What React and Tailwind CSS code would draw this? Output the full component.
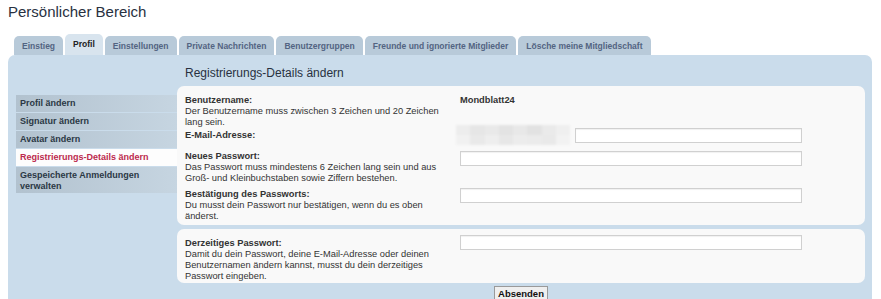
import React from "react";

const tabs = [
  { label: "Einstieg" },
  { label: "Profil", active: true },
  { label: "Einstellungen" },
  { label: "Private Nachrichten" },
  { label: "Benutzergruppen" },
  { label: "Freunde und ignorierte Mitglieder" },
  { label: "Lösche meine Mitgliedschaft" },
];

const navItems = [
  { label: "Profil ändern" },
  { label: "Signatur ändern" },
  { label: "Avatar ändern" },
  { label: "Registrierungs-Details ändern", active: true },
  { label: "Gespeicherte Anmeldungen verwalten", tall: true },
];

// verpixelte E-Mail-Adresse
const blurCells = [
  "#ededed", "#e6e6e6", "#e9e9e9", "#e3e3e3", "#e8e8e8", "#e2e2e2", "#eaeaea", "#efefef",
  "#f1f1f1", "#e9e9e9", "#eeeeee", "#e7e7e7", "#ececec", "#ebebeb", "#e9e9e9", "#f2f2f2",
];

function TextInput({ className = "" }) {
  return (
    <div
      className={`h-[15px] bg-white border border-[#d0d0d0] shadow-[inset_0_1px_1px_rgba(0,0,0,0.06)] ${className}`}
    />
  );
}

export default function App() {
  return (
    <div className="w-[881px] h-[299px] overflow-hidden bg-white text-[#333] font-['Liberation_Sans',Arial,sans-serif]">
      {/* Titel */}
      <h1 className="pt-[3px] pl-2 text-[15px] leading-[18px] text-[#28313f]">Persönlicher Bereich</h1>

      {/* Tabs */}
      <div className="ml-[14px] mt-[13px] flex items-end gap-[2px]">
        {tabs.map((t) =>
          t.active ? (
            <div
              key={t.label}
              className="h-[21px] px-[8px] pt-[5px] rounded-t-[5px] bg-[#d8e4ee] text-[8.5px] font-bold leading-[11px] text-[#222]"
            >
              {t.label}
            </div>
          ) : (
            <div
              key={t.label}
              className="h-[19px] px-[8px] pt-[5px] rounded-t-[5px] bg-[#b8cad9] text-[8.5px] font-bold leading-[11px] text-[#536482]"
            >
              {t.label}
            </div>
          )
        )}
      </div>

      {/* Hauptbereich */}
      <div className="ml-2 mr-[9px] h-[260px] rounded-t-[7px] bg-[#cadceb] flex">
        {/* Navigation links */}
        <div className="ml-2 pt-[40px] w-[161px] flex flex-col gap-[1px]">
          {navItems.map((n) => (
            <div
              key={n.label}
              className={`px-[4px] text-[9px] font-bold ${
                n.tall ? "pt-[3px] pb-[2px] leading-[10.5px]" : "h-[17px] leading-[17px]"
              } ${
                n.active
                  ? "bg-[#fdfdfd] text-[#bc2a4d]"
                  : "bg-gradient-to-r from-[#b2c2cf] to-[#c6d5e1] text-[#2b3845]"
              }`}
            >
              {n.tall ? (
                <>
                  Gespeicherte Anmeldungen
                  <br />
                  verwalten
                </>
              ) : (
                n.label
              )}
            </div>
          ))}
        </div>

        {/* Inhalt */}
        <div className="flex-1 mr-[7px] pt-[6px] flex flex-col">
          <h2 className="pl-2 text-[12px] leading-[25px] text-[#28313f]">Registrierungs-Details ändern</h2>

          {/* Panel 1 */}
          <div className="bg-[#f9f9f9] rounded-[7px] pl-2 pt-[9px] pb-[3px] text-[9.3px] leading-[11px]">
            <div className="flex">
              <div className="w-[275px] pr-[10px]">
                <div className="font-bold">Benutzername:</div>
                <div>Der Benutzername muss zwischen 3 Zeichen und 20 Zeichen lang sein.</div>
              </div>
              <div className="font-bold">Mondblatt24</div>
            </div>

            <div className="flex">
              <div className="w-[275px] pt-[2px] font-bold">E-Mail-Adresse:</div>
              <div className="flex items-start">
                <div className="-ml-[4px] w-[114px] h-[20px] -mt-[3px] -mb-[3px] grid grid-cols-8 blur-[1px]">
                  {blurCells.map((c, i) => (
                    <div key={i} style={{ background: c }} />
                  ))}
                </div>
                <TextInput className="ml-[5px] w-[227px]" />
              </div>
            </div>

            <div className="flex mt-[8px]">
              <div className="w-[275px] pr-[10px]">
                <div className="font-bold">Neues Passwort:</div>
                <div>Das Passwort muss mindestens 6 Zeichen lang sein und aus Groß- und Kleinbuchstaben sowie Ziffern bestehen.</div>
              </div>
              <TextInput className="w-[342px]" />
            </div>

            <div className="flex mt-[4px]">
              <div className="w-[275px] pr-[10px] pt-[1px]">
                <div className="font-bold">Bestätigung des Passworts:</div>
                <div>Du musst dein Passwort nur bestätigen, wenn du es oben änderst.</div>
              </div>
              <TextInput className="w-[342px]" />
            </div>
          </div>

          {/* Panel 2 */}
          <div className="mt-[4px] bg-[#f9f9f9] rounded-[7px] pl-2 pt-[6px] pb-[1px] text-[9.3px] leading-[11px]">
            <div className="flex">
              <div className="w-[275px] pr-[10px] pt-[3px]">
                <div className="font-bold">Derzeitiges Passwort:</div>
                <div>Damit du dein Passwort, deine E-Mail-Adresse oder deinen Benutzernamen ändern kannst, musst du dein derzeitiges Passwort eingeben.</div>
              </div>
              <TextInput className="w-[342px]" />
            </div>
          </div>

          {/* Absenden */}
          <div className="mt-[3px] flex justify-center">
            <button className="h-[15px] px-[3px] border border-[#9a9a9a] bg-[#efefef] text-[9.5px] font-bold leading-[13px] text-[#111]">
              Absenden
            </button>
          </div>
        </div>
      </div>
    </div>
  );
}
